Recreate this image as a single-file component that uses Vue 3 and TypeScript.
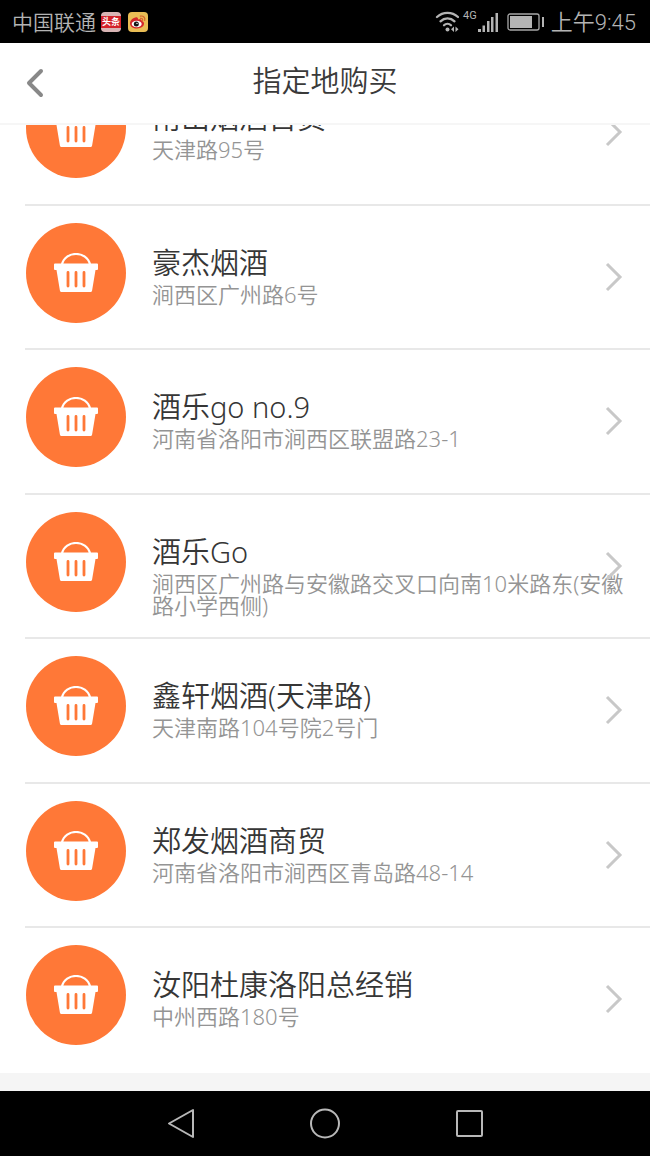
<script setup lang="ts">
import { onMounted, ref } from 'vue'

interface Shop {
  name: string
  address: string
}

const shops: Shop[] = [
  { name: '南山烟酒百货', address: '天津路95号' },
  { name: '豪杰烟酒', address: '涧西区广州路6号' },
  { name: '酒乐go no.9', address: '河南省洛阳市涧西区联盟路23-1' },
  { name: '酒乐Go', address: '涧西区广州路与安徽路交叉口向南10米路东(安徽路小学西侧)' },
  { name: '鑫轩烟酒(天津路)', address: '天津南路104号院2号门' },
  { name: '郑发烟酒商贸', address: '河南省洛阳市涧西区青岛路48-14' },
  { name: '汝阳杜康洛阳总经销', address: '中州西路180号' },
]

const scroller = ref<HTMLElement | null>(null)

onMounted(() => {
  if (scroller.value) scroller.value.scrollTop = scroller.value.scrollHeight
})
</script>

<template>
  <div class="screen">
    <div class="status">
      <div class="status-side">
        <span class="carrier">中国联通</span>
        <span class="headline-app">头条</span>
        <svg class="weibo" viewBox="0 0 20 20" aria-hidden="true">
          <rect width="20" height="20" rx="4" fill="#e9bd55" />
          <path d="M8.500 5.200C5 5.600 2 8.300 2 11.500c0 3 3.300 5 7 5 4.200 0 7-2.200 7-4.900 0-1.500-1.200-2.300-2.400-2.600.5-1.700-1.300-2.400-3.600-1.400.2-1.600-.4-2.500-1.500-2.400Z" fill="#d3282b" />
          <ellipse cx="8.700" cy="12" rx="5" ry="3.300" fill="#fff" />
          <circle cx="8.300" cy="12.100" r="2.500" fill="#151515" />
          <circle cx="9" cy="11.400" r=".7" fill="#fff" />
          <path d="M12.300 4.200c3-.8 5.200 1.400 4.400 4.300M12.500 6.300c1.400-.3 2.400.6 2.100 2" fill="none" stroke="#d9622b" stroke-width="1.200" stroke-linecap="round" />
        </svg>
      </div>
      <div class="status-side">
        <svg class="wifi" viewBox="0 0 26 22" aria-hidden="true">
          <g fill="none" stroke="#b4b4b4" stroke-width="2.300" stroke-linecap="round">
            <path d="M4 6C10 .5 19 .5 25 6" />
            <path d="M7.500 10.300c4-3.800 10-3.800 14 0" />
            <path d="M11 14.300c2-2 5-2 7 0" />
          </g>
          <circle cx="14.500" cy="18.500" r="2" fill="#b4b4b4" />
          <path d="M21 15.500v5.500l-3-2.700ZM22.500 15.500v5.500l3-2.700Z" fill="#b4b4b4" />
        </svg>
        <span class="network">4G</span>
        <svg class="signal" viewBox="0 0 22 22" aria-hidden="true">
          <path d="M1 18h3v3H1zM5.500 14.500h2.500v6.500H5.500zM10 10h2.500v11H10zM14 6h2.500v15H14zM18.500 2H21v19h-2.500z" fill="#b4b4b4" />
        </svg>
        <svg class="battery" viewBox="0 0 38 20" aria-hidden="true">
          <rect x="1" y="2" width="31" height="16" rx="2" fill="none" stroke="#a8a8a8" stroke-width="1.300" />
          <rect x="3" y="4" width="22" height="12" fill="#b4b4b4" />
          <rect x="35" y="5" width="2" height="10" fill="#b4b4b4" />
        </svg>
        <time class="clock">上午9:45</time>
      </div>
    </div>

    <header class="header">
      <button class="back" type="button" aria-label="返回">
        <svg viewBox="0 0 20 32" aria-hidden="true">
          <path d="M16 4 4 16l12 12" fill="none" stroke="#888" stroke-width="4" stroke-linecap="round" stroke-linejoin="round" />
        </svg>
      </button>
      <h1 class="title">指定地购买</h1>
    </header>

    <main ref="scroller" class="content">
      <ul class="list">
        <li v-for="shop in shops" :key="shop.name" class="item">
          <a class="link" href="#">
            <span class="badge">
              <svg viewBox="0 0 46 40" aria-hidden="true">
                <path d="M9 11.500C12-2.500 34-2.500 37 11.500" fill="none" stroke="#fff" stroke-width="2.200" />
                <path d="M2 10.500h42q1 0 1 1v4.500q0 1-1 1H42.500l-3.400 20.500q-.2 1.500-1.700 1.500H8.600q-1.500 0-1.700-1.500L3.500 17H2q-1 0-1-1v-4.500q0-1 1-1Z" fill="#fff" />
                <path d="M15 19.500v13.500M23 19.500v13.500M31 19.500v13.500" stroke="#ff7837" stroke-width="2.800" stroke-linecap="round" />
              </svg>
            </span>
            <span class="text">
              <span class="name">{{ shop.name }}</span>
              <span class="address">{{ shop.address }}</span>
            </span>
            <svg class="chevron" viewBox="0 0 18 30" aria-hidden="true">
              <path d="M2 2l13 13L2 28" fill="none" stroke="#c8c8c8" stroke-width="3" />
            </svg>
          </a>
        </li>
      </ul>
    </main>

    <nav class="navbar" aria-label="系统导航">
      <button type="button" aria-label="后退">
        <svg viewBox="0 0 32 32" aria-hidden="true">
          <path d="M28 2v27L4 15.500Z" />
        </svg>
      </button>
      <button type="button" aria-label="主屏幕">
        <svg viewBox="0 0 32 32" aria-hidden="true">
          <circle cx="16" cy="15.500" r="14" />
        </svg>
      </button>
      <button type="button" aria-label="最近任务">
        <svg viewBox="0 0 32 32" aria-hidden="true">
          <rect x="4" y="3" width="25" height="25" rx="1" />
        </svg>
      </button>
    </nav>
  </div>
</template>

<style>
body {
  margin: 0;
}
</style>

<style scoped>
.screen {
  display: flex;
  flex-direction: column;
  height: 100vh;
  background: #f5f5f5;
  font-family: "Noto Sans", "Noto Sans CJK SC", sans-serif;
  font-weight: 350;
}

button {
  display: flex;
  align-items: center;
  justify-content: center;
  padding: 0;
  border: 0;
  background: none;
}

.status {
  display: flex;
  flex: none;
  align-items: center;
  justify-content: space-between;
  height: 43px;
  padding: 0 14px 0 12px;
  background: #000;
  color: #b4b4b4;
  font-family: Roboto, "Noto Sans CJK SC", sans-serif;
}

.status-side {
  display: flex;
  align-items: center;
}

.carrier,
.clock {
  padding-top: 2px;
  font-size: 21px;
  line-height: 30px;
}

.clock {
  font-size: 22px;
}

.headline-app {
  width: 20px;
  margin: 0 7px 0 5px;
  border-top: 4px solid #d8b4b4;
  border-bottom: 4px solid #d8b4b4;
  border-radius: 4px;
  background: #d3222a;
  color: #fff;
  font-size: 9px;
  font-weight: 700;
  line-height: 12px;
  text-align: center;
  white-space: nowrap;
}

.weibo {
  width: 20px;
  height: 20px;
}

.wifi {
  width: 26px;
  height: 22px;
}

.network {
  align-self: flex-start;
  margin-left: 4px;
  font-size: 11px;
  font-weight: 400;
  line-height: 20px;
}

.signal {
  width: 22px;
  height: 22px;
}

.battery {
  width: 38px;
  height: 20px;
  margin: 0 6px 0 8px;
}

.header {
  display: grid;
  flex: none;
  grid-template-columns: 70px 1fr 70px;
  align-items: center;
  height: 80px;
  border-bottom: 2px solid #f6f6f6;
  background: #fff;
}

.back {
  height: 80px;
}

.back svg {
  width: 20px;
  height: 32px;
}

.title {
  margin: 0;
  padding-bottom: 4px;
  color: #3a3a3a;
  font-size: 29px;
  font-weight: 350;
  line-height: 36px;
  text-align: center;
}

.content {
  flex: 1;
  min-height: 0;
  overflow-y: auto;
  scrollbar-width: none;
}

.list {
  margin: 0 0 18px;
  padding: 0 0 0 25px;
  background: #fff;
  list-style: none;
}

.item {
  box-sizing: border-box;
  min-height: 145px;
  border-bottom: 2px solid #e8e8e8;
}

.item:nth-child(even) {
  min-height: 144px;
}

.item:last-child {
  border-bottom-color: transparent;
}

.link {
  position: relative;
  display: flex;
  gap: 26px;
  padding: 17px 25px 6px 1px;
  color: inherit;
  text-decoration: none;
}

.badge {
  display: flex;
  flex: none;
  align-items: center;
  justify-content: center;
  width: 100px;
  height: 100px;
  border-radius: 50%;
  background: #ff7837;
}

.badge svg {
  width: 46px;
  height: 40px;
}

.text {
  display: flex;
  flex-direction: column;
  padding-top: 20px;
}

.name {
  color: #363636;
  font-size: 29px;
  line-height: 40px;
}

.address {
  color: #949494;
  font-size: 22px;
  line-height: 22px;
}

.chevron {
  position: absolute;
  top: 56px;
  right: 27px;
  width: 18px;
  height: 30px;
}

.navbar {
  display: flex;
  flex: none;
  align-items: center;
  justify-content: center;
  gap: 112px;
  height: 65px;
  background: #000;
}

.navbar svg {
  width: 32px;
  height: 32px;
  fill: none;
  stroke: #b8b8b8;
  stroke-width: 2;
  stroke-linejoin: round;
}
</style>
